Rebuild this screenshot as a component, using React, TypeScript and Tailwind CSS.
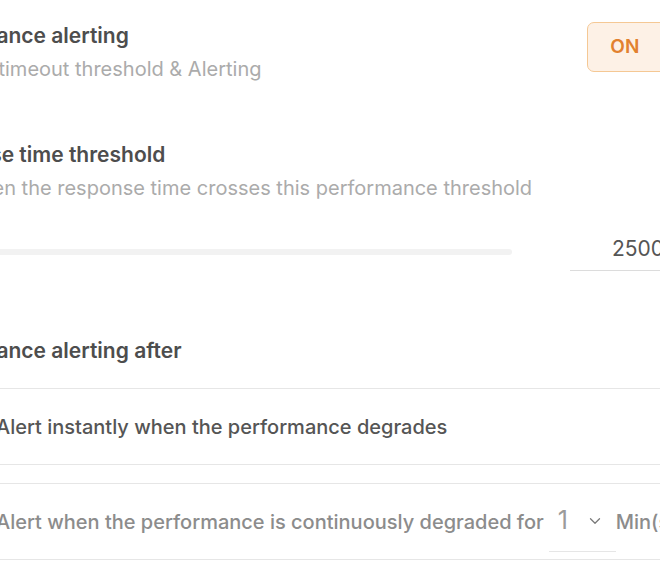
import { ChevronDown } from "lucide-react";

// Settings panel, cropped: the page is wider than the window, so it is shifted left
// and clipped just like the screenshot.

const Radio = ({ checked }: { checked?: boolean }) => (
  <span
    className={
      checked
        ? "w-[20px] h-[20px] rounded-full border-[6px] border-[#e47f32] bg-white shrink-0"
        : "w-[20px] h-[20px] rounded-full border-2 border-[#d4d4d4] bg-white shrink-0"
    }
  />
);

export default function App() {
  return (
    <div className="w-[660px] h-[577px] overflow-hidden bg-white font-['Inter','Noto_Sans',sans-serif] antialiased">
      <div className="-ml-[86px] w-[773px] pt-[23px]">
        {/* Performance alerting toggle */}
        <div className="flex items-start justify-between">
          <div className="flex flex-col gap-[7px]">
            <span className="text-[21px] leading-[26px] font-semibold text-[#4d4d4d]">
              Performance alerting
            </span>
            <span className="text-[20px] leading-[26px] text-[#ababab]">
              Set your timeout threshold &amp; Alerting
            </span>
          </div>
          <button className="w-[100px] h-[50px] -mt-[1px] rounded-[7px] border border-[#f5c894] bg-[#fdf1e6] text-[#e2812f] text-[19px] font-semibold tracking-[0.3px] pr-[24px]">
            ON
          </button>
        </div>

        {/* Response time threshold */}
        <div className="mt-[60px] flex flex-col gap-[7px]">
          <span className="text-[21px] leading-[26px] font-semibold text-[#4d4d4d]">
            Response time threshold
          </span>
          <span className="text-[20px] leading-[26px] text-[#ababab]">
            Alert when the response time crosses this performance threshold
          </span>
        </div>

        <div className="mt-[26px] flex items-start">
          <div className="w-[598px] h-[6px] mt-[22px] rounded-full bg-[#f2f2f2]" />
          <input
            readOnly
            value="2500"
            className="ml-[58px] w-[117px] h-[44px] border-b border-[#dcdcdc] pl-[42px] text-[21px] text-[#555555] outline-none bg-transparent"
          />
        </div>

        {/* Alerting after */}
        <div className="mt-[67px] text-[21px] leading-[26px] font-semibold text-[#4d4d4d]">
          Performance alerting after
        </div>

        <div className="mt-[24px] flex flex-col gap-[18px]">
          <div className="h-[77px] rounded-[8px] border border-[#e6e6e6] flex items-center gap-[37px] pl-[24px]">
            <Radio checked />
            <span className="text-[20px] font-medium text-[#555555]">
              Alert instantly when the performance degrades
            </span>
          </div>
          <div className="h-[77px] rounded-[8px] border border-[#e6e6e6] flex items-center gap-[37px] pl-[24px]">
            <Radio />
            <div className="flex items-center text-[20px] font-medium text-[#8c8c8c]">
              <span>Alert when the performance is continuously degraded for</span>
              <div className="ml-[5px] w-[67px] h-[60px] border-b border-[#e6e6e6] flex items-center justify-between pl-[9px] pr-[12px]">
                <span className="text-[25px] font-normal text-[#9b9b9b]">1</span>
                <ChevronDown size={18} strokeWidth={1.75} className="text-[#7a7a7a]" />
              </div>
              <span>Min(s)</span>
            </div>
          </div>
        </div>
      </div>
    </div>
  );
}
